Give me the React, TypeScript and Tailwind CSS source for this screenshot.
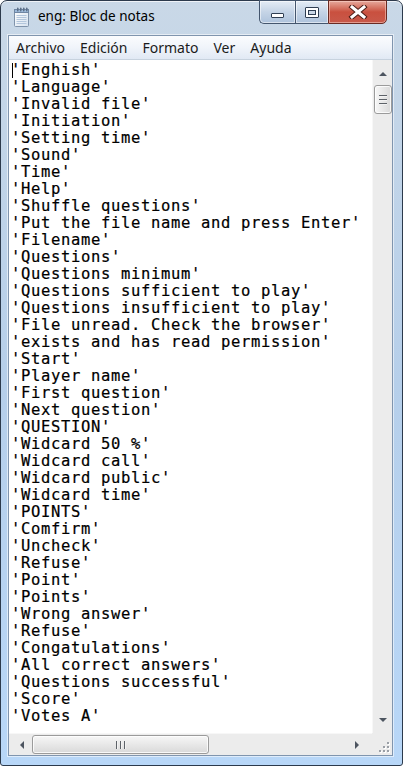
import React from 'react';

// Contenido del archivo abierto en el Bloc de notas
const LINES = [
  "'Enghish'",
  "'Language'",
  "'Invalid file'",
  "'Initiation'",
  "'Setting time'",
  "'Sound'",
  "'Time'",
  "'Help'",
  "'Shuffle questions'",
  "'Put the file name and press Enter'",
  "'Filename'",
  "'Questions'",
  "'Questions minimum'",
  "'Questions sufficient to play'",
  "'Questions insufficient to play'",
  "'File unread. Check the browser'",
  "'exists and has read permission'",
  "'Start'",
  "'Player name'",
  "'First question'",
  "'Next question'",
  "'QUESTION'",
  "'Widcard 50 %'",
  "'Widcard call'",
  "'Widcard public'",
  "'Widcard time'",
  "'POINTS'",
  "'Comfirm'",
  "'Uncheck'",
  "'Refuse'",
  "'Point'",
  "'Points'",
  "'Wrong answer'",
  "'Refuse'",
  "'Congatulations'",
  "'All correct answers'",
  "'Questions successful'",
  "'Score'",
  "'Votes A'",
];

const MENU = ['Archivo', 'Edición', 'Formato', 'Ver', 'Ayuda'];

const uiFont = "font-['Segoe_UI','Noto_Sans',sans-serif]";

function NotepadIcon() {
  return (
    <svg width="17" height="20" viewBox="0 0 17 20">
      <defs>
        <linearGradient id="pg" x1="0" y1="0" x2="1" y2="1">
          <stop offset="0" stopColor="#ffffff" />
          <stop offset="1" stopColor="#d6e2ef" />
        </linearGradient>
      </defs>
      <rect x="1.5" y="2.5" width="14" height="17" rx="1" fill="url(#pg)" stroke="#7f93ab" />
      <rect x="1.5" y="2.5" width="14" height="3" fill="#9cb9da" stroke="#6f86a3" />
      {[4, 7, 10, 13].map((x) => (
        <rect key={x} x={x} y="0.5" width="1.5" height="4" rx="0.7" fill="#5b6f88" />
      ))}
      {[8, 10, 12, 14, 16].map((y) => (
        <line key={y} x1="3.5" y1={y + 0.5} x2="13.5" y2={y + 0.5} stroke="#b3c6dc" />
      ))}
    </svg>
  );
}

function CaptionButtons() {
  return (
    <div className="ml-auto mr-[6px] flex h-[24px] -mt-px">
      {/* Minimizar */}
      <div className="flex w-[36px] items-end justify-center rounded-bl-[5px] border border-r-0 border-[#44566e] bg-gradient-to-b from-[#e4ecf5] via-[#c5d4e6] to-[#aec3dc] pb-[5px] shadow-[inset_0_0_0_1px_rgba(255,255,255,0.55)]">
        <div className="h-[5px] w-[13px] rounded-[1px] border border-[#2f3e52] bg-white" />
      </div>
      {/* Maximizar */}
      <div className="flex w-[33px] items-center justify-center border border-r-0 border-[#44566e] bg-gradient-to-b from-[#e4ecf5] via-[#c5d4e6] to-[#aec3dc] shadow-[inset_0_0_0_1px_rgba(255,255,255,0.55)]">
        <div className="flex h-[11px] w-[14px] items-center justify-center rounded-[1px] border border-[#2f3e52] bg-white">
          <div className="mt-[1px] h-[5px] w-[8px] border border-[#2f3e52] bg-[#c9d6e5]" />
        </div>
      </div>
      {/* Cerrar */}
      <div className="flex w-[59px] items-center justify-center rounded-br-[5px] border border-[#6a2a22] bg-gradient-to-b from-[#e6a89c] via-[#c9503f] to-[#c8594a] shadow-[inset_0_0_0_1px_rgba(255,220,210,0.5)]">
        <svg width="20" height="14" viewBox="0 0 20 14">
          <path
            d="M4 2 L16 12 M16 2 L4 12"
            stroke="#4a1d17"
            strokeWidth="5"
            strokeLinecap="square"
            fill="none"
          />
          <path
            d="M4 2 L16 12 M16 2 L4 12"
            stroke="#ffffff"
            strokeWidth="3"
            strokeLinecap="square"
            fill="none"
          />
        </svg>
      </div>
    </div>
  );
}

function Triangle({ dir }: { dir: 'up' | 'down' | 'left' | 'right' }) {
  const d = {
    up: 'M0 4 L4 0 L8 4 Z',
    down: 'M0 0 L8 0 L4 4 Z',
    left: 'M4 0 L4 8 L0 4 Z',
    right: 'M0 0 L4 4 L0 8 Z',
  }[dir];
  const vertical = dir === 'up' || dir === 'down';
  return (
    <svg width={vertical ? 8 : 4} height={vertical ? 4 : 8} viewBox={vertical ? '0 0 8 4' : '0 0 4 8'}>
      <path d={d} fill="#4d5560" />
    </svg>
  );
}

function VScrollBar() {
  return (
    <div className="flex w-[20px] flex-col border-l border-[#f7f7f7] bg-[#ececec]">
      <div className="flex h-[24px] items-center justify-center pt-[4px]">
        <Triangle dir="up" />
      </div>
      <div className="ml-px mt-[1px] flex h-[29px] w-[18px] flex-col items-center justify-center gap-[2px] rounded-[3px] border border-[#9b9b9b] bg-gradient-to-r from-[#f7f7f7] to-[#d9d9d9] shadow-[inset_0_0_0_1px_rgba(255,255,255,0.8)]">
        {[0, 1, 2].map((i) => (
          <div key={i} className="h-[2px] w-[8px] border-t border-[#5d6268] border-b border-b-[#f2f2f2]" />
        ))}
      </div>
      <div className="flex-1" />
      <div className="flex h-[22px] items-center justify-center pb-[4px]">
        <Triangle dir="down" />
      </div>
    </div>
  );
}

function HScrollBar() {
  return (
    <div className="flex h-[22px] border-t border-[#f7f7f7] bg-[#ececec]">
      <div className="flex w-[23px] items-center justify-center pl-[3px]">
        <Triangle dir="left" />
      </div>
      <div className="mt-px flex h-[19px] w-[177px] items-center justify-center gap-[2px] rounded-[3px] border border-[#9b9b9b] bg-gradient-to-b from-[#f7f7f7] to-[#d9d9d9] shadow-[inset_0_0_0_1px_rgba(255,255,255,0.8)]">
        {[0, 1, 2].map((i) => (
          <div key={i} className="h-[8px] w-[2px] border-l border-[#5d6268] border-r border-r-[#f2f2f2]" />
        ))}
      </div>
      <div className="flex-1" />
      <div className="flex w-[22px] items-center justify-center pr-[8px]">
        <Triangle dir="right" />
      </div>
    </div>
  );
}

function SizeGrip() {
  const dots = [
    [8, 0],
    [4, 4],
    [8, 4],
    [0, 8],
    [4, 8],
    [8, 8],
  ];
  return (
    <div className="flex h-[22px] w-[20px] items-end justify-end bg-[#ececec] pb-[2px] pr-[2px]">
      <svg width="11" height="11" viewBox="0 0 11 11">
        {dots.map(([x, y]) => (
          <g key={`${x}-${y}`}>
            <rect x={x + 1} y={y + 1} width="2" height="2" fill="#ffffff" />
            <rect x={x} y={y} width="2" height="2" fill="#9a9fa6" />
          </g>
        ))}
      </svg>
    </div>
  );
}

export default function App() {
  return (
    <div className="h-[766px] w-[403px] overflow-hidden bg-white">
      <div className="flex h-full w-full flex-col rounded-t-[7px] rounded-b-[3px] border border-[#2c3a4c] bg-gradient-to-b from-[#c9d8e7] via-[#b6cfea] to-[#b8d7f8] pl-[7px] pr-[9px] pb-[9px] shadow-[inset_0_1px_0_rgba(255,255,255,0.7)]">
        {/* Barra de título */}
        <div className="flex h-[34px] shrink-0 items-start">
          <div className="ml-[5px] mt-[6px]">
            <NotepadIcon />
          </div>
          <span className={`${uiFont} ml-[8px] mt-[6px] text-[13.5px] leading-[18px] text-black`}>
            eng: Bloc de notas
          </span>
          <CaptionButtons />
        </div>

        {/* Área cliente */}
        <div className="flex flex-1 flex-col border border-[#8095ae] bg-white shadow-[0_0_0_1px_rgba(255,255,255,0.55)]">
          <div
            className={`${uiFont} flex h-[24px] shrink-0 items-center gap-[15px] border-b border-[#c7d2de] bg-gradient-to-b from-[#fbfcfe] via-[#f0f4fa] to-[#e1e9f4] pl-[7px] text-[14px] text-[#1b1b1b]`}
          >
            {MENU.map((m) => (
              <span key={m}>{m}</span>
            ))}
          </div>

          <div className="flex flex-1">
            <div className="flex flex-1 flex-col">
              <div className="flex-1 overflow-hidden pl-[2px] pt-[2px] font-['DejaVu_Sans_Mono',monospace] text-[15.5px] leading-[17px] tracking-[0.67px] text-black [-webkit-text-stroke:0.2px_black]">
                {LINES.map((line, i) => (
                  <div key={i} className="relative whitespace-pre">
                    {i === 0 && <span className="absolute left-px top-[1px] h-[15px] w-px bg-black" />}
                    {line}
                  </div>
                ))}
              </div>
              <HScrollBar />
            </div>
            <div className="flex flex-col">
              <div className="flex flex-1">
                <VScrollBar />
              </div>
              <SizeGrip />
            </div>
          </div>
        </div>
      </div>
    </div>
  );
}
